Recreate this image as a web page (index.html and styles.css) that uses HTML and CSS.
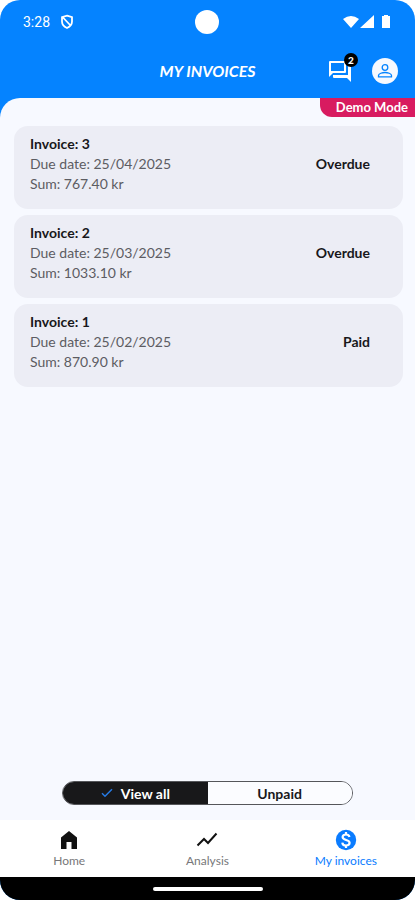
FILE: index.html
```html
<!DOCTYPE html>
<html lang="en">
<head>
<meta charset="utf-8">
<meta name="viewport" content="width=device-width, initial-scale=1">
<title>My invoices</title>
<link rel="stylesheet" href="styles.css">
</head>
<body>
<div class="screen">
  <div class="status-bar">
    <div class="status-left">
      <span>3:28</span>
      <svg width="14" height="16" viewBox="0 0 14 16" fill="none" stroke="currentColor" stroke-width="1.8" aria-hidden="true"><path d="M7 1.600 12 3.200v4.300c0 3-2.200 5.300-5 6.500-2.800-1.200-5-3.500-5-6.500V3.200zM3 3.500l8 8.500"/></svg>
    </div>
    <span class="camera"></span>
    <div class="status-right">
      <svg width="47" height="16" viewBox="0 0 47 16" fill="currentColor" aria-hidden="true"><path d="M0 5Q8 -1 16 5L8 14zM31 1v13H17zM39 2h2V1h4v1h2v12h-8z"/></svg>
    </div>
  </div>
  <header class="app-bar">
    <h1>MY INVOICES</h1>
    <div class="actions">
      <button class="icon-button chat" aria-label="Messages">
        <svg width="22" height="22" viewBox="0 0 22 22" fill="currentColor" aria-hidden="true"><path fill-rule="evenodd" d="M0 2Q0 1 1 1h15q1 0 1 1v10q0 1-1 1H4l-4 4zM2 3v8h13V3z"/><path d="M19 5h2q1 0 1 1v16l-4-4H5q-1 0-1-1v-2h15z"/></svg>
        <span class="badge">2</span>
      </button>
      <button class="icon-button profile" aria-label="Profile">
        <svg width="16" height="16" viewBox="0 0 16 16" fill="none" stroke="currentColor" stroke-width="1.300" aria-hidden="true"><circle cx="8" cy="4.500" r="2.800"/><path d="M1.500 13.800v-1.300c0-2 4-3 6.500-3s6.500 1 6.500 3v1.300z"/></svg>
      </button>
    </div>
  </header>
  <main class="content">
    <span class="demo">Demo Mode</span>
    <ul class="invoices">
      <li class="card">
        <div><h2>Invoice: 3</h2><p>Due date: 25/04/2025</p><p>Sum: 767.40 kr</p></div>
        <strong>Overdue</strong>
      </li>
      <li class="card">
        <div><h2>Invoice: 2</h2><p>Due date: 25/03/2025</p><p>Sum: 1033.10 kr</p></div>
        <strong>Overdue</strong>
      </li>
      <li class="card">
        <div><h2>Invoice: 1</h2><p>Due date: 25/02/2025</p><p>Sum: 870.90 kr</p></div>
        <strong>Paid</strong>
      </li>
    </ul>
    <div class="filter">
      <button class="segment selected" aria-pressed="true">
        <svg width="12" height="10" viewBox="0 0 12 10" fill="none" stroke="currentColor" stroke-width="1.500" aria-hidden="true"><path d="M1 5.300 4 8.300 11 1.200"/></svg>
        View all
      </button>
      <button class="segment" aria-pressed="false">Unpaid</button>
    </div>
  </main>
  <nav class="tabs">
    <a href="#home">
      <svg width="24" height="22" viewBox="0 0 24 22" fill="#111" aria-hidden="true"><path d="M4 8.500 12 2l8 6.500V20h-5.500v-7h-5v7H4z"/></svg>
      Home
    </a>
    <a href="#analysis">
      <svg width="24" height="22" viewBox="0 0 24 22" fill="none" stroke="#111" stroke-width="2" aria-hidden="true"><path d="M2.500 16.500 9 10l4 4 8.500-9.500"/></svg>
      Analysis
    </a>
    <a href="#invoices" class="active" aria-current="page">
      <svg width="24" height="22" viewBox="0 0 24 22" fill="none" aria-hidden="true"><circle cx="12" cy="11" r="10.200" fill="currentColor"/><path d="M15.500 8C15 6.200 13.700 5.500 12 5.500c-2 0-3.400 1-3.400 2.600 0 3.700 7 2 7 5.700 0 1.700-1.500 2.700-3.600 2.700-2.100 0-3.500-1-3.700-2.900M12 3v2.500M12 16.500V19" stroke="#fff" stroke-width="2.200"/></svg>
      My invoices
    </a>
  </nav>
  <div class="system-bar"><span></span></div>
</div>
</body>
</html>
```
FILE: styles.css
```css
* { box-sizing: border-box; margin: 0; padding: 0; }
body { background: #fff; font-family: Lato, sans-serif; color: #18181b; }
button { font: inherit; color: inherit; border: 0; background: none; cursor: pointer; }
svg { display: block; flex: none; }

.screen {
  display: flex;
  flex-direction: column;
  min-height: 100vh;
  border-radius: 20px;
  overflow: hidden;
  background: #0583ff;
}

.status-bar {
  display: grid;
  grid-template-columns: 1fr auto 1fr;
  align-items: center;
  height: 43px;
  padding: 0 25px 0 23px;
  color: #fff;
}
.status-left { display: flex; align-items: center; gap: 10px; font: 14px Roboto, sans-serif; }
.status-right { display: flex; justify-content: flex-end; }
.camera { width: 24px; height: 24px; border-radius: 50%; background: #fff; }

.app-bar {
  display: grid;
  grid-template-columns: 1fr auto 1fr;
  align-items: center;
  height: 55px;
  padding: 0 17px;
  color: #fff;
}
.app-bar h1 { grid-column: 2; font-size: 16px; font-style: italic; font-weight: 700; line-height: 20px; }
.actions { display: flex; align-items: center; justify-content: flex-end; gap: 21px; }
.icon-button { display: flex; align-items: center; justify-content: center; }
.chat { position: relative; }
.badge {
  position: absolute;
  top: -7px;
  right: -7px;
  width: 14px;
  height: 14px;
  border-radius: 50%;
  background: #000;
  font-size: 10px;
  font-weight: 900;
  line-height: 14px;
}
.profile { width: 26px; height: 26px; border-radius: 50%; background: #f7f9ff; color: #0583ff; }

.content {
  display: flex;
  flex-direction: column;
  flex: 1;
  border-top-left-radius: 20px;
  background: #f7f9ff;
}
.demo {
  align-self: flex-end;
  height: 19px;
  padding: 0 7px 0 16px;
  border-bottom-left-radius: 12px;
  background: #d81b60;
  color: #fff;
  font-size: 13px;
  font-weight: 700;
  line-height: 19px;
}
.invoices { display: flex; flex-direction: column; gap: 6px; padding: 9px 12px 0 14px; list-style: none; }
.card {
  display: flex;
  align-items: flex-start;
  justify-content: space-between;
  padding: 8px 33px 15px 16px;
  border-radius: 14px;
  background: #ecedf5;
  font-size: 14px;
  line-height: 20px;
}
.card h2 { font-size: 14px; font-weight: 700; }
.card p { color: #5c5c62; }
.card strong { padding-top: 20px; }

.filter {
  display: flex;
  width: 70%;
  height: 24px;
  margin: auto auto 15px;
  border: 1px solid #55565a;
  border-radius: 12px;
  overflow: hidden;
}
.segment {
  display: flex;
  flex: 1;
  align-items: center;
  justify-content: center;
  gap: 8px;
  background: #fbfcff;
  font-size: 14px;
  font-weight: 700;
}
.selected { background: #18181a; color: #fff; }
.selected svg { color: #2678e0; }

.tabs { display: grid; grid-template-columns: repeat(3, 1fr); height: 57px; padding-top: 9px; background: #fff; }
.tabs a {
  display: flex;
  flex-direction: column;
  align-items: center;
  gap: 2px;
  color: #77777a;
  font-size: 12px;
  line-height: 16px;
  text-decoration: none;
}
.tabs .active { color: #0a7cff; }

.system-bar { display: flex; align-items: center; justify-content: center; height: 23px; background: #000; }
.system-bar span { width: 110px; height: 4px; border-radius: 2px; background: #fff; }
```
